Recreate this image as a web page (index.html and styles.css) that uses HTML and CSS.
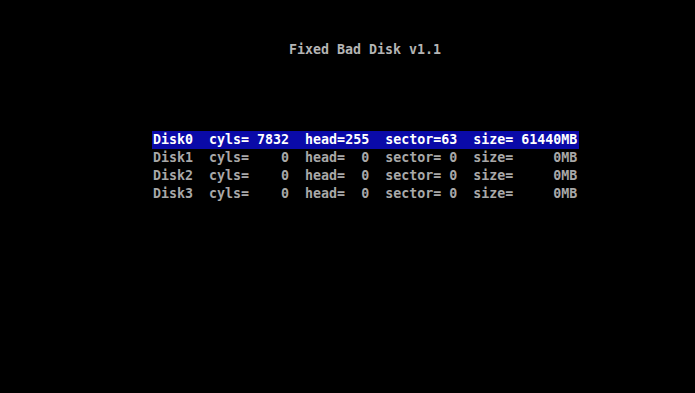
FILE: index.html
```html
<!DOCTYPE html>
<html>
<head>
    <title>Fixed Bad Disk</title>
    <link rel="stylesheet" href="styles.css">
</head>
<body>
    <!-- Text mode screen -->
    <div class="screen">
        <div class="title">Fixed Bad Disk v1.1</div>

        <!-- Disk list -->
        <div class="disk-list">
            <div class="row selected">Disk0  cyls= 7832  head=255  sector=63  size= 61440MB</div>
            <div class="row">Disk1  cyls=    0  head=  0  sector= 0  size=     0MB</div>
            <div class="row">Disk2  cyls=    0  head=  0  sector= 0  size=     0MB</div>
            <div class="row">Disk3  cyls=    0  head=  0  sector= 0  size=     0MB</div>
        </div>
    </div>
</body>
</html>
```

FILE: styles.css
```css
/* General Styles */
body {
    margin: 0;
    padding: 0;
    background-color: #000000;
    height: 393px;
    overflow: hidden;
}

.screen {
    padding: 41px 0 0 153px;
    font-family: "DejaVu Sans Mono", monospace;
    font-weight: bold;
    font-size: 13.3px;
    line-height: 18px;
    color: #a8a8a8;
}

.title {
    margin-left: 136px; /* 17 character cells */
    margin-bottom: 72px; /* 4 blank lines */
    color: #b4b4b4;
    white-space: pre;
}

.disk-list {
    display: flex;
    flex-direction: column;
    align-items: flex-start;
}

.row {
    white-space: pre;
    height: 18px;
}

.row.selected {
    background-color: #0a0aa8;
    color: #ffffff;
    margin-left: -1px;
    padding: 0 2px 0 1px;
}
```
